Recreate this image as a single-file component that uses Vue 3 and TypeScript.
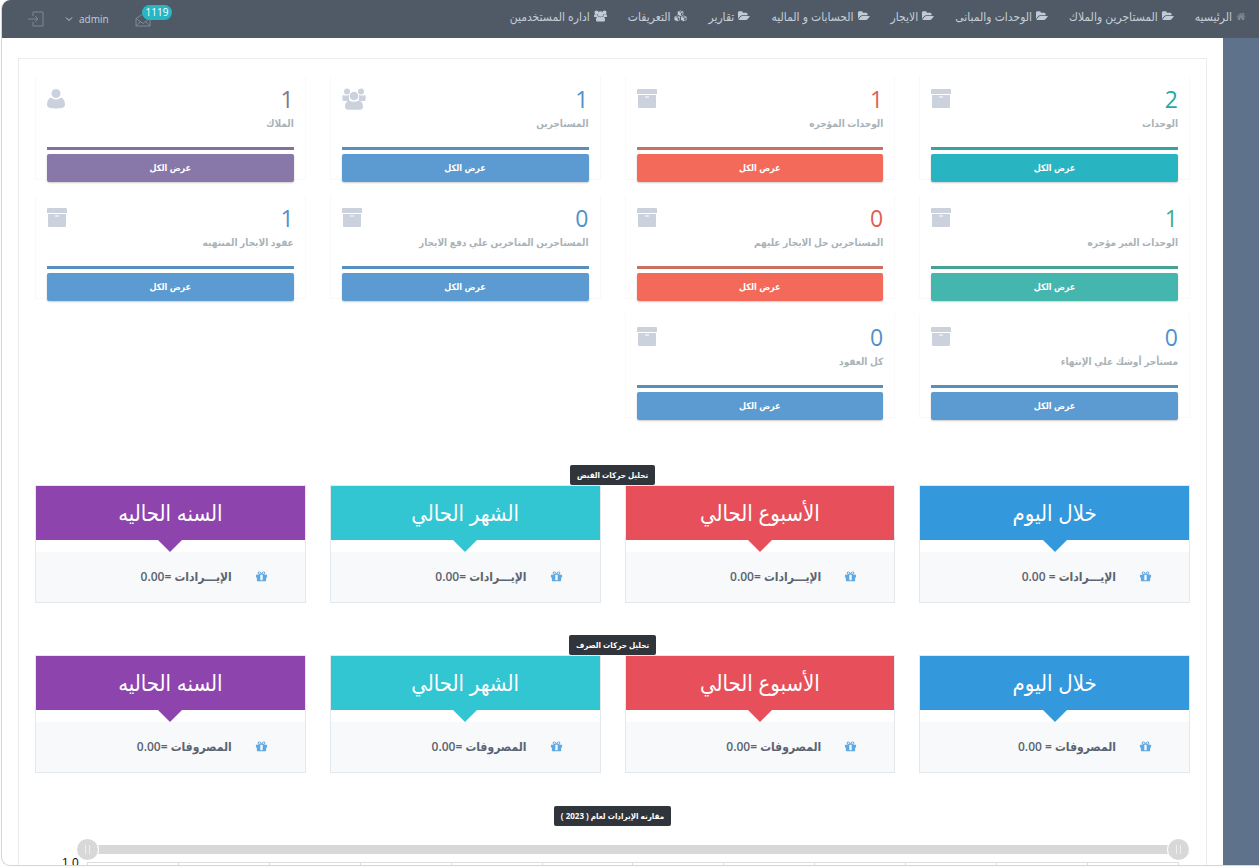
<script setup lang="ts">
import { ref } from 'vue'

type IconName = 'home' | 'folder' | 'users' | 'cubes'
interface NavItem { label: string; icon: IconName }
interface Stat { value: number; title: string; tone: string; icon: 'archive' | 'user' | 'group' }
interface Period { title: string; tone: string; amount: string }

const nav: NavItem[] = [
  { label: 'الرئيسيه', icon: 'home' },
  { label: 'المستاجرين والملاك', icon: 'folder' },
  { label: 'الوحدات والمبانى', icon: 'folder' },
  { label: 'الايجار', icon: 'folder' },
  { label: 'الحسابات و الماليه', icon: 'folder' },
  { label: 'تقارير', icon: 'folder' },
  { label: 'التعريفات', icon: 'cubes' },
  { label: 'اداره المستخدمين', icon: 'users' },
]

const stats: Stat[] = [
  { value: 2, title: 'الوحدات', tone: 'cyan', icon: 'archive' },
  { value: 1, title: 'الوحدات المؤجره', tone: 'red', icon: 'archive' },
  { value: 1, title: 'المستاجرين', tone: 'blue', icon: 'group' },
  { value: 1, title: 'الملاك', tone: 'purple', icon: 'user' },
  { value: 1, title: 'الوحدات الغير مؤجره', tone: 'green', icon: 'archive' },
  { value: 0, title: 'المستاجرين حل الايجار عليهم', tone: 'red', icon: 'archive' },
  { value: 0, title: 'المستاجرين المتاخرين علي دفع الايجار', tone: 'blue', icon: 'archive' },
  { value: 1, title: 'عقود الايجار المنتهيه', tone: 'blue', icon: 'archive' },
  { value: 0, title: 'مستأجر أوشك علي الإنتهاء', tone: 'blue', icon: 'archive' },
  { value: 0, title: 'كل العقود', tone: 'blue', icon: 'archive' },
]

const periods: Period[] = [
  { title: 'خلال اليوم', tone: 'day', amount: '= 0.00' },
  { title: 'الأسبوع الحالي', tone: 'week', amount: '=0.00' },
  { title: 'الشهر الحالي', tone: 'month', amount: '=0.00' },
  { title: 'السنه الحاليه', tone: 'year', amount: '=0.00' },
]

const analyses = [
  { badge: 'تحليل حركات القبض', label: 'الإيـــرادات' },
  { badge: 'تحليل حركات الصرف', label: 'المصروفات' },
]

const rangeStart = ref(0)
const rangeEnd = ref(100)
</script>

<template>
  <div class="window" dir="rtl">
    <header class="topbar">
      <nav class="menu">
        <a v-for="item in nav" :key="item.label" href="#" class="menu-item">
          <svg v-if="item.icon === 'home'" class="ico home" viewBox="0 0 1792 1792"><path d="M1472 992v480q0 26-19 45t-45 19h-384v-384h-256v384h-384q-26 0-45-19t-19-45v-480q0-1 .5-3t.5-3l575-474 575 474q1 2 1 6zm223-69l-62 74q-8 9-21 11h-3q-13 0-21-7l-692-577-692 577q-12 8-24 7-13-2-21-11l-62-74q-8-10-7-23.5t11-21.5l719-599q32-26 76-26t76 26l244 204v-195q0-14 9-23t23-9h192q14 0 23 9t9 23v408l219 182q10 8 11 21.500t-7 23.500z" /></svg>
          <svg v-else-if="item.icon === 'folder'" class="ico folder" viewBox="0 0 1920 1792"><path d="M1879 952q0 31-31 66l-336 396q-43 51-120.500 86.500t-143.500 35.500h-1088q-34 0-60.500-13t-26.500-43q0-31 31-66l336-396q43-51 120.500-86.500t143.500-35.500h1088q34 0 60.500 13t26.500 43zm-343-344v160h-832q-94 0-197 47.500t-164 119.500l-337 396-5 6q0-4-.5-12.500t-.5-12.500v-960q0-92 66-158t158-66h320q92 0 158 66t66 158v32h544q92 0 158 66t66 158z" /></svg>
          <svg v-else-if="item.icon === 'users'" class="ico wide" viewBox="0 0 26 24"><circle cx="5" cy="5" r="4" /><circle cx="21" cy="5" r="4" /><circle cx="13" cy="8" r="5.500" /><path d="M0 13c0-3 1-5 3-5 1 1 2 1 4 1 0 2 0 3 1 5H2c-1 0-2 0-2-1zM26 13c0-3-1-5-3-5-1 1-2 1-4 1 0 2 0 3-1 5h6c1 0 2 0 2-1zM4 20c0-4 1-7 5-7 3 2 5 2 8 0 4 0 5 3 5 7 0 2-1 3-3 3H7c-2 0-3-1-3-3z" /></svg>
          <svg v-else class="ico wide" viewBox="0 0 28 24"><path fill-rule="evenodd" d="M14 0l6 2.500v7L14 12 8 9.500v-7zM14 1.500L10 3l4 1.700L18 3zM15 6v4.500l3.500-1.500V4.500zM7 11l6 2.500v7L7 23.500l-6-3v-7zM7 12.500L3 14l4 1.700L11 14zM8 17v4.500l3.500-1.500v-4.500zM21 11l6 2.500v7l-6 3-6-3v-7zM21 12.500L17 14l4 1.700L25 14zM22 17v4.500l3.500-1.500v-4.500z" /></svg>
          <span>{{ item.label }}</span>
        </a>
      </nav>
      <div class="account">
        <button class="mail" type="button" aria-label="الرسائل">
          <svg class="mail-ico" viewBox="0 0 16 14"><path d="M1 5.500L8 1l7 4.500V13H1zM1 13l5-5M15 13l-5-5M1 5.500l7 5 7-5" /></svg>
          <span class="count">1119</span>
        </button>
        <button class="user" type="button">
          <span>admin</span>
          <svg class="chev" viewBox="0 0 8 6"><path d="M1 1.500l3 3 3-3" /></svg>
        </button>
        <button class="logout" type="button" aria-label="خروج">
          <svg class="logout-ico" viewBox="0 0 16 16"><path d="M5 5V1h10v14H5v-4M0 8h10M7 5l3 3-3 3" /></svg>
        </button>
      </div>
    </header>

    <div class="body">
      <aside class="rail"></aside>
      <main class="content">
        <section class="panel">
          <div class="stats">
            <article v-for="s in stats" :key="s.title" class="stat" :class="s.tone">
              <div class="stat-top">
                <div>
                  <div class="value">{{ s.value }}</div>
                  <h2 class="title">{{ s.title }}</h2>
                </div>
                <svg v-if="s.icon === 'archive'" class="stat-ico" viewBox="0 0 20 20"><path fill-rule="evenodd" d="M0 1a1 1 0 0 1 1-1h18a1 1 0 0 1 1 1v4H0zM1 6h18v12a1 1 0 0 1-1 1H2a1 1 0 0 1-1-1zM8 7.500v1h4v-1z" /></svg>
                <svg v-else-if="s.icon === 'user'" class="stat-ico one" viewBox="0 0 18 20"><circle cx="9" cy="4.500" r="4.500" /><path d="M4 8.500c3 2.500 7 2.500 10 0 3 1 4 4 4 7 0 2-1 3-3 3.500-4 .6-8 .6-12 0-2-.5-3-1.500-3-3.500 0-3 1-6 4-7z" /></svg>
                <svg v-else class="stat-ico many" viewBox="0 0 24 22"><circle cx="5" cy="3.500" r="3" /><circle cx="19" cy="3.500" r="3" /><circle cx="12" cy="8" r="4.300" /><path d="M1 7c2 .7 4 .7 6 0-.4 2.500 0 4.200 1 6H1c-1-2-1-5 0-6zM23 7c-2 .7-4 .7-6 0 .4 2.500 0 4.200-1 6h7c1-2 1-5 0-6zM7 12.500c3 1.600 7 1.600 10 0 3 1 4 3 4 6 0 2-1 3-3 3.200H6c-2-.2-3-1.200-3-3.200 0-3 1-5 4-6z" /></svg>
              </div>
              <div class="bar"></div>
              <a href="#" class="more">عرض الكل</a>
            </article>
          </div>

          <section v-for="a in analyses" :key="a.badge" class="analysis">
            <h3 class="tag">{{ a.badge }}</h3>
            <div class="periods">
              <article v-for="p in periods" :key="p.title" class="period" :class="p.tone">
                <h4 class="period-head">{{ p.title }}</h4>
                <div class="period-foot">
                  <svg class="gift" viewBox="0 0 1792 1792"><path d="M1056 1356v-716h-320v716q0 25 18 38.500t46 13.500h192q28 0 46-13.500t18-38.500zm-456-844h195l-126-161q-26-31-69-31-40 0-68 28t-28 68 28 68 68 28zm688-96q0-40-28-68t-68-28q-43 0-69 31l-125 161h194q40 0 68-28t28-68zm376 256v320q0 14-9 23t-23 9h-96v416q0 40-28 68t-68 28h-1088q-40 0-68-28t-28-68v-416h-96q-14 0-23-9t-9-23v-320q0-14 9-23t23-9h440q-93 0-158.500-65.500t-65.500-158.500 65.500-158.500 158.500-65.500q107 0 168 77l128 165 128-165q61-77 168-77 93 0 158.500 65.500t65.500 158.500-65.500 158.500-158.500 65.500h440q14 0 23 9t9 23z" /></svg>
                  <span>{{ a.label }} {{ p.amount }}</span>
                </div>
              </article>
            </div>
          </section>

          <section class="compare">
            <h3 class="tag">مقارنه الإيرادات لعام ( 2023 )</h3>
            <div class="range" dir="ltr">
              <input v-model.number="rangeStart" type="range" min="0" max="100" aria-label="من" />
              <input v-model.number="rangeEnd" type="range" min="0" max="100" aria-label="إلى" />
            </div>
            <div class="chart" dir="ltr">
              <span class="axis">1.0</span>
              <div class="plot"><i v-for="n in 12" :key="n"></i></div>
            </div>
          </section>
        </section>
      </main>
    </div>
  </div>
</template>

<style>
body { margin: 0; background: #fdfdfd; }
</style>

<style scoped>
* { box-sizing: border-box; }
.window {
  height: calc(100vh - 1px);
  margin-left: 1px;
  overflow: hidden;
  display: flex;
  flex-direction: column;
  border: solid #d3d5d7;
  border-width: 0 0 1px 1px;
  border-radius: 9px 0 0 9px;
  background: #fff;
  font-family: "Open Sans", "DejaVu Sans Condensed", "DejaVu Sans", sans-serif;
}
a { color: inherit; text-decoration: none; }
button { padding: 0; border: 0; background: none; color: inherit; font: inherit; }
h2, h3, h4 { margin: 0; }
svg { display: block; flex: none; }

.topbar {
  flex: none;
  height: 38px;
  padding: 0 13px 0 26px;
  display: flex;
  justify-content: space-between;
  background: #505a66;
  color: #c3ced8;
  font-size: 12px;
}
.menu { display: flex; gap: 21px; height: 32px; align-items: center; }
.menu-item { display: flex; align-items: center; gap: 4px; white-space: nowrap; }
.ico { fill: #c0cbd5; height: 12px; }
.home { width: 10px; height: 11px; fill: #7b8794; }
.folder { width: 12px; }
.wide { width: 13px; }
.account { display: flex; align-items: center; font-size: 10px; }
.mail { position: relative; width: 16px; height: 38px; }
.mail-ico { width: 16px; height: 14px; margin-top: 2px; fill: none; stroke: #7b8794; }
.count {
  position: absolute;
  left: 7px;
  top: 5px;
  padding: 0 4px;
  border-radius: 8px;
  background: #29b6c4;
  color: #fff;
  font-size: 10px;
  line-height: 15px;
}
.user { display: flex; align-items: center; gap: 6px; margin-right: 26px; }
.chev { width: 8px; height: 6px; fill: none; stroke: #c3ced8; }
.logout { margin-right: 21px; }
.logout-ico { width: 16px; height: 16px; fill: none; stroke: #7b8794; }

.body { flex: 1; min-height: 0; display: flex; }
.rail { flex: none; width: 36px; background: #5e738b; }
.content { flex: 1; min-width: 0; padding: 20px 16px 0; }
.panel { padding: 17px 16px 40px; border: 1px solid #ececef; }

.stats { display: grid; grid-template-columns: repeat(4, 1fr); gap: 15px 24px; }
.stat {
  height: 104px;
  padding: 9px 11px 0;
  border: solid #f9f9fa;
  border-width: 0 1px 1px;
}
.stat-top { display: flex; justify-content: space-between; height: 62px; }
.value { font-size: 23px; line-height: 28px; color: var(--ink); }
.title { font-size: 10px; line-height: 20px; color: #a9b3b8; white-space: nowrap; }
.stat-ico { width: 20px; height: 20px; margin-top: 4px; fill: #cbd2de; }
.one { width: 18px; }
.many { width: 24px; height: 22px; margin-top: 3px; }
.bar { height: 3px; background: var(--line); }
.more {
  display: block;
  margin-top: 4px;
  border-radius: 2px;
  background: var(--fill);
  box-shadow: 0 1px 2px rgba(0, 0, 0, .2);
  color: #fff;
  font-size: 9px;
  font-weight: 700;
  line-height: 28px;
  text-align: center;
}
.cyan { --ink: #2ba7a4; --line: #36a39c; --fill: #29b4c2; }
.red { --ink: #df5f53; --line: #cb7061; --fill: #f36a5a; }
.blue { --ink: #5290cb; --line: #588fbd; --fill: #5b9bd1; }
.purple { --ink: #7d7596; --line: #8470a0; --fill: #8877a9; }
.green { --ink: #3faa9b; --line: #45a294; --fill: #45b6ae; }

.tag {
  width: max-content;
  margin: 0 auto;
  padding: 0 7px;
  border-radius: 2px;
  background: #2f353b;
  color: #fff;
  font-size: 8px;
  line-height: 20px;
  white-space: nowrap;
}
.analysis { margin-top: 32px; }
.stats + .analysis { margin-top: 47px; }
.periods { display: grid; grid-template-columns: repeat(4, 1fr); gap: 24px; }
.period { border: 1px solid #e3e8ec; border-top-color: #d9eef2; height: 118px; background: #fff; }
.period-head {
  position: relative;
  height: 54px;
  background: var(--fill);
  color: #fff;
  font-size: 22px;
  font-weight: 400;
  line-height: 52px;
  text-align: center;
}
.period-head::after {
  content: "";
  position: absolute;
  left: calc(50% - 12px);
  top: 100%;
  border: 12px solid transparent;
  border-top-color: var(--fill);
  border-bottom: 0;
}
.period-foot {
  display: flex;
  align-items: center;
  gap: 23px;
  height: 50px;
  margin-top: 12px;
  padding: 0 37px 2px 0;
  background: #f7f9fb;
  color: #5b6470;
  font-size: 12px;
  font-weight: 600;
}
.gift { width: 13px; height: 13px; fill: #5fa8e2; }
.day { --fill: #3498dc; }
.week { --fill: #e7505a; }
.month { --fill: #32c5d2; }
.year { --fill: #8e44ad; }

.compare { margin-top: 33px; }
.range { display: grid; align-items: center; height: 21px; margin: 13px 1px 0 42px; }
.range::before { content: ""; grid-area: 1 / 1; height: 9px; margin: 0 10px; background: #d8d8d8; }
.range input {
  grid-area: 1 / 1;
  appearance: none;
  width: 100%;
  height: 21px;
  margin: 0;
  background: none;
  pointer-events: none;
}
.range input::-webkit-slider-thumb {
  appearance: none;
  width: 21px;
  height: 21px;
  border-radius: 50%;
  background:
    linear-gradient(#efefef, #efefef) 8px 6px / 1px 9px no-repeat,
    linear-gradient(#efefef, #efefef) 12px 6px / 1px 9px no-repeat,
    #d8d8d8;
  box-shadow: 0 0 0 1px #fff;
  pointer-events: auto;
}
.chart { display: flex; margin: -4px 11px 0 27px; }
.axis { flex: none; width: 25px; font: 12px/15px "Liberation Sans", sans-serif; color: #111; }
.plot { flex: 1; display: grid; grid-template-columns: repeat(12, 1fr); height: 120px; margin-top: 6px; border: solid #dedede; border-width: 1px 1px 0 0; }
.plot i { border-left: 1px solid #dedede; }
</style>
